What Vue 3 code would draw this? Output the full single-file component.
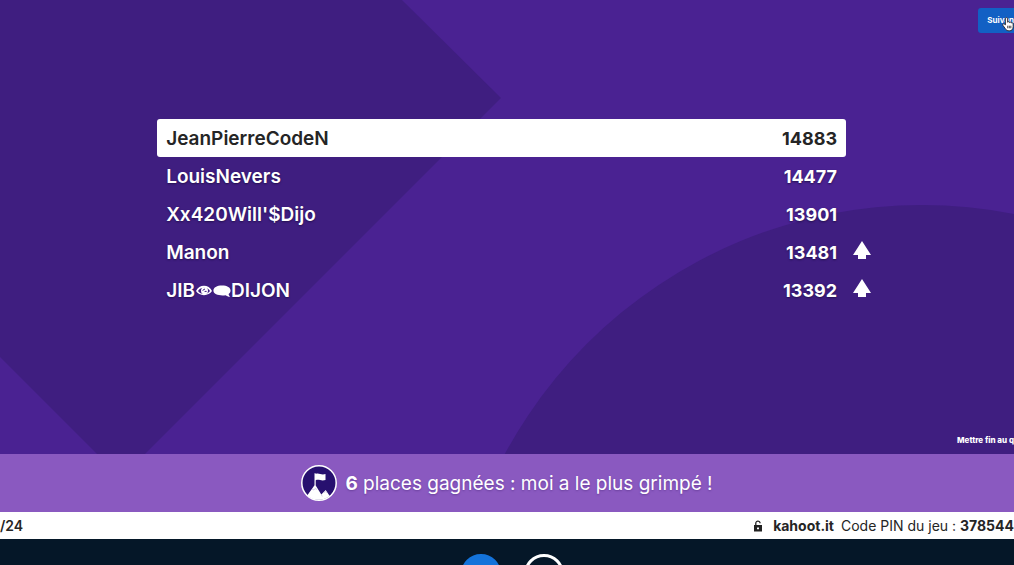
<script setup>
const players = [
  { id: 1, parts: ['JeanPierreCodeN'], score: 14883, top: true, up: false },
  { id: 2, parts: ['LouisNevers'], score: 14477, top: false, up: false },
  { id: 3, parts: ["Xx420Will'$Dijo"], score: 13901, top: false, up: false },
  { id: 4, parts: ['Manon'], score: 13481, top: false, up: true },
  { id: 5, parts: ['JIB', 'DIJON'], score: 13392, top: false, up: true },
]
</script>

<template>
  <div class="page">
    <main class="stage">
      <svg class="backdrop" viewBox="0 0 1014 454" preserveAspectRatio="none" aria-hidden="true">
        <path d="M0 0H402L501 98L145 454H97L0 357Z" />
        <circle cx="922" cy="679" r="474" />
      </svg>
      <header class="top">
        <button class="next" type="button">Suivan</button>
        <svg class="pointer" viewBox="0 0 14 18" aria-hidden="true">
          <path
            d="M4 10V3c0-2 2.500-2 2.500 0v4c.3-1 2.200-.9 2.300.3.500-.8 2-.6 2.200.5.700-.5 2-.2 2 1.200v3c0 3-1.500 5-4.500 5-2.500 0-3.700-1-4.700-2.700L1 10.500c-.8-1.500 1-2.300 2-1.200z"
          />
          <path class="lines" d="M6.700 11v3M8.500 11v3M10.300 11v3" />
        </svg>
      </header>
      <ol class="board">
        <li v-for="p in players" :key="p.id" class="row">
          <div class="entry" :class="{ leader: p.top }">
            <span class="name">
              <span>{{ p.parts[0] }}</span>
              <template v-if="p.parts[1]">
                <svg class="glyph" viewBox="0 0 18 14" role="img" aria-label="œil">
                  <path
                    fill="#fff"
                    fill-rule="evenodd"
                    d="M1 8C4 1 14 1 17 8C14 13.500 4 13.500 1 8ZM3 8C5.500 12 12.500 12 15 8C12.500 3.600 5.500 3.600 3 8Z"
                  />
                  <circle cx="9.500" cy="7.800" r="3.500" fill="#fff" />
                  <path d="M7.800 7.800q.5-1.800 2.200-1.700M9.600 8.400h2" fill="none" stroke="#3f1e80" />
                </svg>
                <svg class="glyph" viewBox="0 0 18 14" role="img" aria-label="bulle">
                  <path
                    fill="#fff"
                    d="M9 2.500c5 0 8.600 2 8.600 5 0 1.500-.7 2.500-2 3.500.1 1.200.8 2 1.700 2.700-2 .1-3.600-.6-4.700-1.500C6.500 13 .4 11.500 .4 7.500 .4 4.500 4 2.500 9 2.500z"
                  />
                </svg>
                <span>{{ p.parts[1] }}</span>
              </template>
            </span>
            <span class="score">{{ p.score }}</span>
          </div>
          <svg v-if="p.up" class="arrow" viewBox="0 0 18 18" role="img" aria-label="en hausse">
            <path d="M9 0L18 14H13V18H5V14H0Z" fill="#fff" />
          </svg>
        </li>
      </ol>
      <div class="finish">
        <a class="end" href="#">Mettre fin au q</a>
      </div>
    </main>

    <section class="banner">
      <svg class="badge" viewBox="0 0 36 36" aria-hidden="true">
        <circle cx="18" cy="18" r="17.200" fill="#27106f" stroke="#fff" stroke-width="1.500" />
        <path
          d="M6.200 30.500L13.500 20.300V8.300H14.700V9C18 7.600 20 10.400 24.500 9V15C20 16.500 18 13.800 14.700 15.200V20.500L20.300 29.500L24.700 25L28.700 31C23 36 12 36 6.200 30.500Z"
          fill="#fff"
        />
        <path d="M11 24l2 1 1-1.500 2 1M23 27.500l1.500-.8 1.500.8M20.300 29.500l1 2" fill="none" stroke="#bcaed8" stroke-width=".6" />
      </svg>
      <p class="climb"><strong>6</strong> places gagnées : moi a le plus grimpé !</p>
    </section>

    <footer class="status">
      <span class="count">/24</span>
      <div class="pin">
        <svg class="lock" viewBox="0 0 10 12" aria-hidden="true">
          <path d="M2.800 5.500V3.200c0-2.800 4.300-2.800 4.300 0" fill="none" stroke="#222" stroke-width="1.300" />
          <path fill="#222" fill-rule="evenodd" d="M1 5h8v6.500h-8zM4 7.500v1.700h2V7.500z" />
        </svg>
        <strong class="site">kahoot.it</strong>
        <span>Code PIN du jeu : <strong>378544</strong></span>
      </div>
    </footer>

    <div class="controls">
      <button class="round filled" type="button" aria-label="Lecture"></button>
      <button class="round" type="button" aria-label="Pause"></button>
    </div>
  </div>
</template>

<style>
body {
  margin: 0;
}
</style>

<style scoped>
.page {
  display: flex;
  flex-direction: column;
  min-height: 100vh;
  overflow: hidden;
  background: #051728;
  color: #fff;
  font-family: Inter, "Noto Sans", sans-serif;
}
.stage {
  position: relative;
  display: flex;
  flex: 1;
  flex-direction: column;
  background: #4a2292;
}
.backdrop {
  position: absolute;
  inset: 0;
  width: 100%;
  height: 100%;
  fill: #3f1e80;
}
.top {
  position: relative;
  display: flex;
  align-items: flex-start;
  justify-content: flex-end;
  height: 111px;
  padding-top: 8px;
}
.next {
  height: 25px;
  padding: 0 0 0 9px;
  border: 0;
  border-radius: 3px 0 0 3px;
  background: #1260c4;
  color: #fff;
  font: 700 8px/25px Inter, sans-serif;
  white-space: nowrap;
}
.pointer {
  position: absolute;
  top: 16px;
  right: 0;
  width: 12px;
  height: 16px;
  fill: #fff;
  stroke: #222;
  stroke-width: 1;
}
.lines {
  fill: none;
}
.board {
  position: relative;
  margin: 0;
  padding: 0;
  list-style: none;
}
.row {
  display: grid;
  grid-template-columns: 80.4% 1fr;
  column-gap: 7px;
  padding-left: 15.5%;
}
.entry {
  display: flex;
  align-items: center;
  justify-content: space-between;
  height: 38px;
  padding: 0 9px;
  font-size: 19px;
  font-weight: 600;
  text-shadow: 0 1px 2px #24104f;
}
.leader {
  border-radius: 3px;
  background: #fff;
  color: #252525;
  text-shadow: none;
}
.name {
  display: flex;
  align-items: center;
}
.score {
  font-size: 18px;
  font-weight: 700;
}
.glyph {
  width: 18px;
  height: 14px;
}
.arrow {
  width: 18px;
  height: 18px;
  margin-top: 8px;
}
.finish {
  position: relative;
  display: flex;
  flex: 1;
  align-items: flex-end;
  justify-content: flex-end;
  padding-bottom: 8px;
}
.end {
  color: #fff;
  font-size: 8px;
  font-weight: 800;
  line-height: 12px;
  text-decoration: none;
  white-space: nowrap;
}
.banner {
  display: flex;
  align-items: center;
  justify-content: center;
  gap: 8px;
  height: 58px;
  background: #8a59c0;
}
.badge {
  width: 36px;
  height: 36px;
}
.climb {
  margin: 0;
  font-size: 19px;
  text-shadow: 0 1px 2px #6a409c;
}
.status {
  display: flex;
  align-items: center;
  justify-content: space-between;
  height: 27px;
  background: #fff;
  color: #252525;
  font-size: 14px;
  white-space: nowrap;
}
.count {
  font-weight: 600;
}
.pin {
  display: flex;
  align-items: center;
}
.lock {
  width: 10px;
  height: 12px;
  margin-right: 10px;
}
.site {
  margin-right: 7px;
}
.controls {
  display: flex;
  justify-content: center;
  gap: 23px;
  box-sizing: border-box;
  height: 26px;
  padding: 15px 0 0 11px;
  overflow: hidden;
}
.round {
  flex: none;
  box-sizing: border-box;
  width: 40px;
  height: 40px;
  padding: 0;
  border: 3px solid #fff;
  border-radius: 50%;
  background: transparent;
}
.filled {
  border-color: #1473da;
  background: #1473da;
}
</style>
